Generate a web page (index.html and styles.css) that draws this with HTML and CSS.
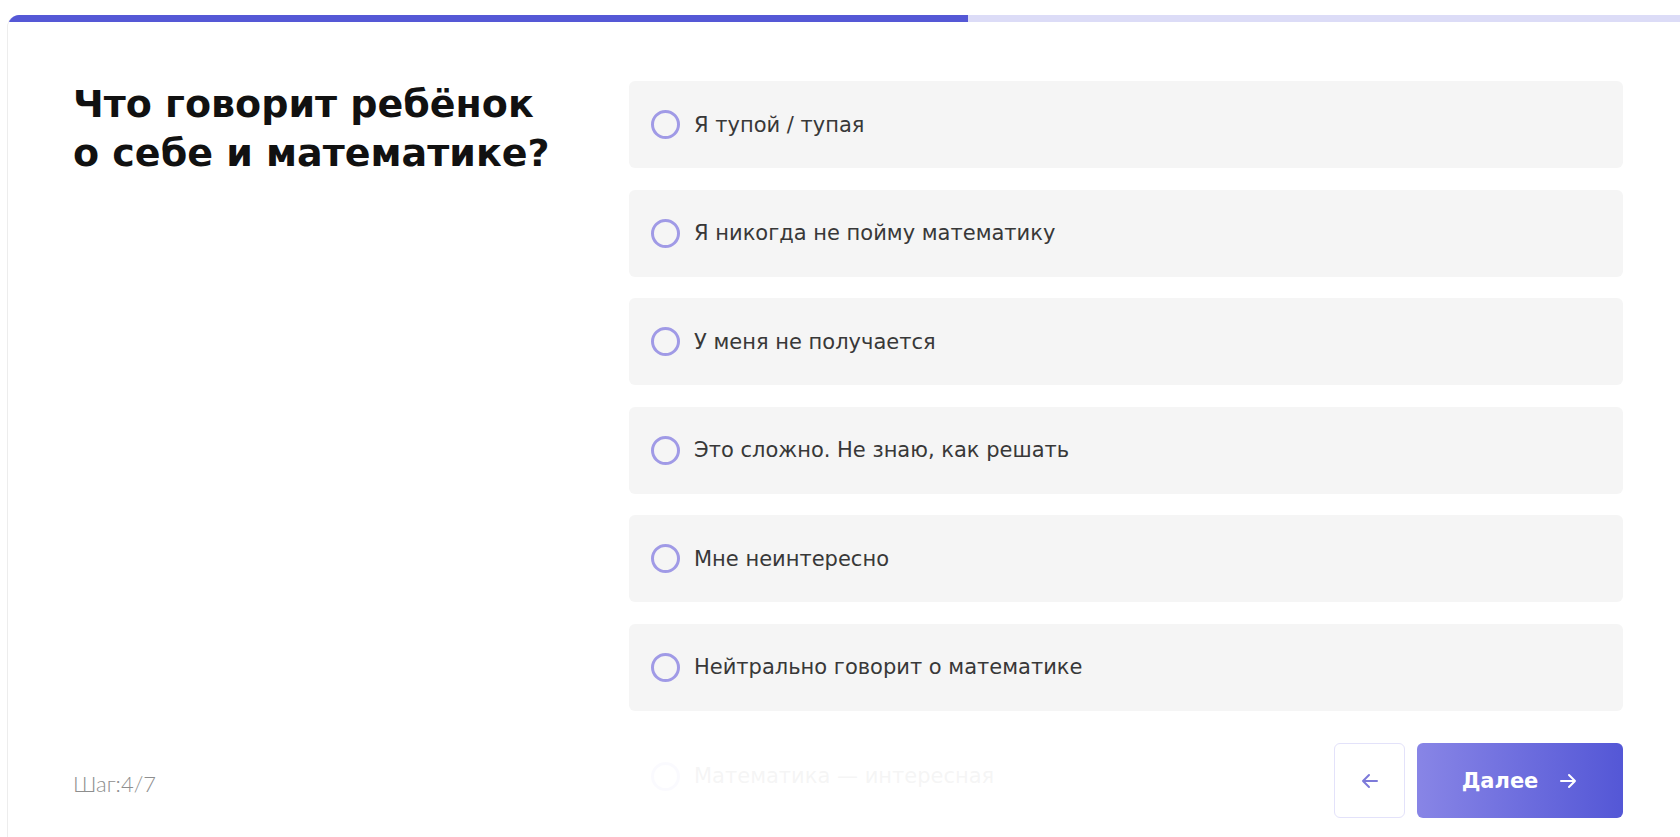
FILE: index.html
```html
<!DOCTYPE html>
<html lang="ru">
<head>
  <meta charset="UTF-8">
  <meta name="viewport" content="width=device-width, initial-scale=1.0">
  <title>Тест: ребёнок и математика</title>
  <link rel="stylesheet" href="styles.css">
</head>
<body>

  <div class="quiz">
    <div class="progress">
      <div class="progress-fill" style="width: 56.8%"></div>
    </div>

    <div class="quiz-body">
      <h1 class="question">Что говорит ребёнок<br>о себе и математике?</h1>

      <div class="answers">
        <label class="answer"><span class="radio"></span>Я тупой / тупая</label>
        <label class="answer"><span class="radio"></span>Я никогда не пойму математику</label>
        <label class="answer"><span class="radio"></span>У меня не получается</label>
        <label class="answer"><span class="radio"></span>Это сложно. Не знаю, как решать</label>
        <label class="answer"><span class="radio"></span>Мне неинтересно</label>
        <label class="answer"><span class="radio"></span>Нейтрально говорит о математике</label>
        <label class="answer"><span class="radio"></span>Математика — интересная</label>
      </div>
    </div>

    <div class="quiz-footer">
      <div class="step">Шаг:4/7</div>
      <div class="nav">
        <button class="btn-back" type="button">
          <svg width="20" height="20" viewBox="0 0 20 20" fill="none" stroke="currentColor" stroke-width="2" stroke-linecap="round" stroke-linejoin="round">
            <path d="M17 10H3M9 4l-6 6 6 6"/>
          </svg>
        </button>
        <button class="btn-next" type="button">
          Далее
          <svg width="20" height="20" viewBox="0 0 20 20" fill="none" stroke="currentColor" stroke-width="2" stroke-linecap="round" stroke-linejoin="round">
            <path d="M3 10h14M11 4l6 6-6 6"/>
          </svg>
        </button>
      </div>
    </div>
  </div>

</body>
</html>
```

FILE: styles.css
```css
body {
  font-family: 'DejaVu Sans', 'Noto Sans', sans-serif;
  margin: 0;
  background-color: #fff;
  overflow: hidden;
}

.quiz {
  position: relative;
  margin: 15px 0 0 7px;
  width: 1690px;
  height: 860px;
  border: 1px solid #ededed;
  border-top: none;
  border-radius: 12px;
  overflow: hidden;
  background-color: #fff;
}

.progress {
  height: 7px;
  background-color: #dcdcf7;
}

.progress-fill {
  height: 100%;
  background-color: #5558d6;
}

.quiz-body {
  display: grid;
  grid-template-columns: 556px 994px;
  padding: 59px 0 0 65px;
}

.question {
  margin: -1px 0 0;
  font-size: 38px;
  line-height: 49px;
  font-weight: bold;
  color: #111;
}

.answers {
  display: flex;
  flex-direction: column;
  gap: 21.6px;
}

.answer {
  display: flex;
  align-items: center;
  gap: 14px;
  height: 87px;
  padding-left: 22px;
  background-color: #f5f5f5;
  border-radius: 6px;
  font-size: 21px;
  color: #383838;
  cursor: pointer;
}

.radio {
  width: 23px;
  height: 23px;
  border: 3px solid #a09ae6;
  border-radius: 50%;
  flex-shrink: 0;
}

.quiz-footer {
  position: absolute;
  left: 65px;
  top: 709px;
  width: 1550px;
  height: 128px;
  display: flex;
  justify-content: space-between;
  align-items: flex-start;
  padding-top: 19px;
  box-sizing: border-box;
  background-color: rgba(255, 255, 255, 0.95);
  box-shadow: 0 0 0 600px rgba(255, 255, 255, 0.95);
  clip-path: inset(0 -600px -100px -600px);
}

.step {
  margin-top: 27px;
  font-family: 'Lato', sans-serif;
  font-weight: 300;
  font-size: 22px;
  color: #8e8e8e;
}

.nav {
  display: flex;
  gap: 12px;
}

.btn-back {
  width: 71px;
  height: 75px;
  display: flex;
  align-items: center;
  justify-content: center;
  background-color: #fff;
  border: 1px solid #e3e2fa;
  border-radius: 6px;
  color: #7d7ad9;
  cursor: pointer;
}

.btn-next {
  width: 206px;
  height: 75px;
  display: flex;
  align-items: center;
  justify-content: center;
  gap: 20px;
  border: none;
  border-radius: 6px;
  background: linear-gradient(90deg, #8885e6, #5457d6);
  color: #fff;
  font-family: 'DejaVu Sans', sans-serif;
  font-size: 21px;
  font-weight: bold;
  cursor: pointer;
}
```
